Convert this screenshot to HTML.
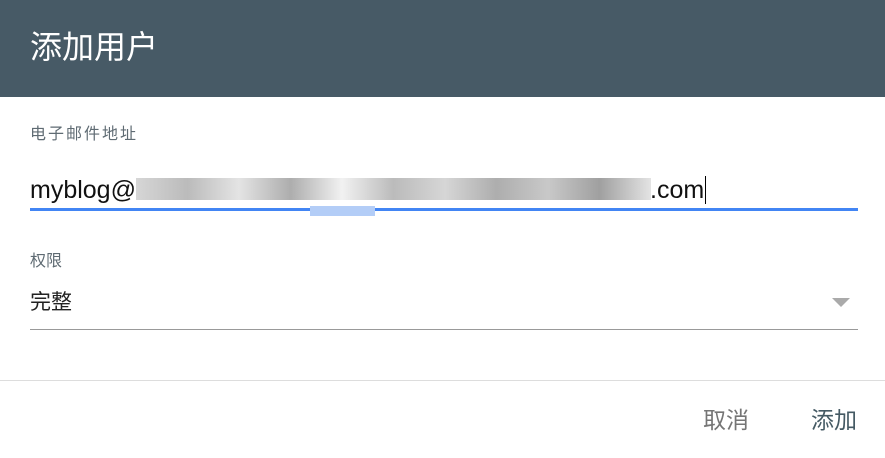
<!DOCTYPE html>
<html><head><meta charset="utf-8"><style>
body{margin:0;width:885px;height:458px;background:#fff;position:relative;overflow:hidden;font-family:"Liberation Sans","Noto Sans CJK SC",sans-serif}
.h{position:absolute;left:0;top:0;width:885px;height:97px;background:#475a66}
.t{position:absolute;left:30px;top:27px;font-size:32px;color:#fff;line-height:40px}
.a{position:absolute}
</style></head><body>
<div class="h"></div>
<div class="t">添加用户</div>
<div class="a" style="left:30px;top:125px;font-size:16px;letter-spacing:2px;color:#5f6b73;line-height:20px">电子邮件地址</div>
<div class="a" style="left:30px;top:175px;font-size:25px;color:#111;line-height:30px">myblog@</div>
<div class="a" style="left:136px;top:178px;width:515px;height:22px;background:linear-gradient(90deg,#ccc 0,#aaa 10%,#ddd 20%,#999 30%,#eee 40%,#aaa 50%,#ccc 60%,#999 70%,#bbb 80%,#888 90%,#ddd 100%);opacity:.8"></div>
<div class="a" style="left:650px;top:175px;font-size:25px;color:#111;line-height:30px">.com</div>
<div class="a" style="left:705px;top:176px;width:1px;height:28px;background:#000"></div>
<div class="a" style="left:30px;top:208px;width:828px;height:3px;background:#4285f4"></div>
<div class="a" style="left:310px;top:206px;width:65px;height:10px;background:#b3cdf7"></div>
<div class="a" style="left:30px;top:252px;font-size:16px;color:#5f6b73;line-height:20px">权限</div>
<div class="a" style="left:30px;top:290px;font-size:21px;color:#222;line-height:26px">完整</div>
<div class="a" style="left:832px;top:298px;width:0;height:0;border-left:9px solid transparent;border-right:9px solid transparent;border-top:9px solid #aaa"></div>
<div class="a" style="left:30px;top:329px;width:828px;height:1px;background:#999"></div>
<div class="a" style="left:0;top:380px;width:885px;height:1px;background:#ddd"></div>
<div class="a" style="left:703px;top:406px;font-size:23px;color:#757575;line-height:28px">取消</div>
<div class="a" style="left:811px;top:406px;font-size:23px;color:#455a64;line-height:28px">添加</div>
</body></html>
